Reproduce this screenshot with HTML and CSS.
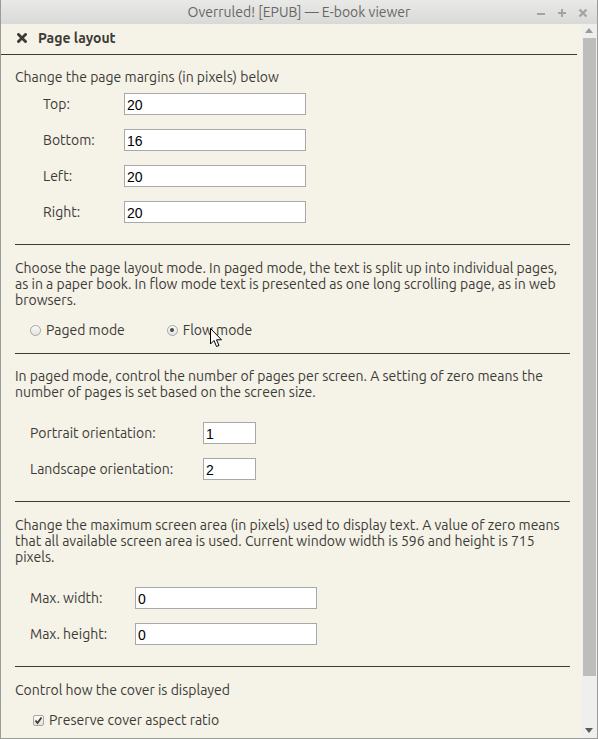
FILE: index.html
```html
<!DOCTYPE html>
<html>
<head>
<meta charset="utf-8">
<link rel="stylesheet" href="styles.css">
</head>
<body>
<div class="window">
  <div class="titlebar">
    <div class="title">Overruled! [EPUB] — E-book viewer</div>
    <div class="wbtns">
      <svg class="wbtn" width="10" height="10" viewBox="0 0 10 10"><rect x="1" y="5" width="8" height="2" fill="#a3a3a3"/></svg>
      <svg class="wbtn" width="10" height="10" viewBox="0 0 10 10"><rect x="1" y="4" width="8" height="2" fill="#a3a3a3"/><rect x="4" y="1" width="2" height="8" fill="#a3a3a3"/></svg>
      <svg class="wbtn" width="10" height="10" viewBox="0 0 10 10"><path d="M1.5 1.5 L8.5 8.5 M8.5 1.5 L1.5 8.5" stroke="#a3a3a3" stroke-width="2.2"/></svg>
    </div>
  </div>
  <div class="main">
    <div class="content">
      <div class="header">
        <svg class="close-ico" width="10" height="10" viewBox="0 0 10 10"><path d="M1.5 1.5 L8.5 8.5 M8.5 1.5 L1.5 8.5" stroke="#3c3b37" stroke-width="2.8" stroke-linecap="square"/></svg>
        <span class="header-title">Page layout</span>
      </div>
      <div class="sections">
        <section class="sec first">
          <p>Change the page margins (in pixels) below</p>
          <div class="form margins">
            <label>Top:</label><input type="text" value="20">
            <label>Bottom:</label><input type="text" value="16">
            <label>Left:</label><input type="text" value="20">
            <label>Right:</label><input type="text" value="20">
          </div>
        </section>
        <hr>
        <section class="sec">
          <p>Choose the page layout mode. In paged mode, the text is split up into individual pages, as in a paper book. In flow mode text is presented as one long scrolling page, as in web browsers.</p>
          <div class="radios">
            <span class="radio"><span class="rbox"></span>Paged mode</span>
            <span class="radio"><span class="rbox on"></span>Flow mode</span>
          </div>
        </section>
        <hr class="short">
        <section class="sec tight">
          <p>In paged mode, control the number of pages per screen. A setting of zero means the number of pages is set based on the screen size.</p>
          <div class="form pages">
            <label>Portrait orientation:</label><input type="text" value="1">
            <label>Landscape orientation:</label><input type="text" value="2">
          </div>
        </section>
        <hr>
        <section class="sec">
          <p>Change the maximum screen area (in pixels) used to display text. A value of zero means that all available screen area is used. Current window width is 596 and height is 715 pixels.</p>
          <div class="form area">
            <label>Max. width:</label><input type="text" value="0">
            <label>Max. height:</label><input type="text" value="0">
          </div>
        </section>
        <hr>
        <section class="sec">
          <p>Control how the cover is displayed</p>
          <div class="check"><span class="cbox"><svg width="9" height="9" viewBox="0 0 9 9"><path d="M1.5 4.5 L3.5 7 L7.5 1.5" stroke="#3c3b37" stroke-width="1.8" fill="none"/></svg></span>Preserve cover aspect ratio</div>
        </section>
      </div>
    </div>
    <div class="scrollbar">
      <div class="arrow up"></div>
      <div class="track"><div class="thumb"></div></div>
      <div class="arrow down"></div>
    </div>
  </div>
  <svg class="cursor" width="14" height="22" viewBox="0 0 14 22"><path d="M0.5 0.5 L0.5 16 L4 12.5 L6.5 18.5 L9 17.5 L6.5 11.8 L11.5 11.8 Z" fill="#fff" stroke="#000" stroke-width="1" stroke-linejoin="miter"/></svg>
</div>
</body>
</html>
```

FILE: styles.css
```css
html, body {
  margin: 0;
  padding: 0;
  background: #f5f2e7;
}
.window {
  position: relative;
  width: 598px;
  height: 739px;
  box-sizing: border-box;
  border: 1px solid #9b9b99;
  border-top: none;
  display: flex;
  flex-direction: column;
  overflow: hidden;
  font-family: "Ubuntu", "Lato", "Open Sans", sans-serif;
  font-size: 14px;
  color: #3c3b37;
  background: #f5f2e7;
}
.titlebar {
  height: 24px;
  flex: none;
  background: linear-gradient(#e9e9e7, #d9d9d7);
  position: relative;
  display: flex;
  align-items: center;
  justify-content: center;
  margin: 0 -1px;
  border-radius: 4px 4px 0 0;
}
.title {
  color: #676765;
  font-size: 14px;
  line-height: 16px;
}
.wbtns {
  position: absolute;
  right: 10px;
  top: 8px;
  display: flex;
  gap: 11px;
}
.wbtn { display: block; }
.main {
  flex: 1;
  display: flex;
  min-height: 0;
}
.content {
  flex: 1;
  min-width: 0;
}
.header {
  margin-right: 5px;
  border-bottom: 1px solid #3c3b37;
  display: flex;
  align-items: flex-start;
  padding-top: 6px;
  box-sizing: content-box;
  height: 24px;
}
.close-ico {
  margin: 3px 0 0 16px;
}
.header-title {
  margin-left: 11px;
  font-weight: bold;
  line-height: 16px;
}
.sections {
  padding: 0 12px 0 14px;
}
p {
  margin: 0;
  line-height: 16px;
}
.sec { padding-top: 15px; }
.sec.first { padding-top: 14px; }
.sec.tight { padding-top: 14px; }
hr {
  border: none;
  border-top: 1px solid #3c3b37;
  margin: 21px 0 0 0;
  height: 0;
}
hr.short { margin-top: 15px; }
.form {
  display: grid;
  row-gap: 14px;
  margin-top: 22px;
  align-items: center;
}
.margins {
  margin-top: 8px;
  grid-template-columns: 81px 182px;
  padding-left: 28px;
}
.pages {
  grid-template-columns: 173px 53px;
  padding-left: 15px;
}
.area {
  grid-template-columns: 105px 182px;
  padding-left: 15px;
}
label {
  line-height: 16px;
}
input {
  box-sizing: border-box;
  height: 22px;
  width: 100%;
  border: 1px solid #a8a8a6;
  background: #fff;
  font-family: "Liberation Sans", Arial, sans-serif;
  font-size: 14px;
  padding: 2px 2px 0;
  color: #000;
  margin: 0;
  outline: none;
}
.radios {
  margin-top: 14px;
  padding-left: 15px;
  display: flex;
  line-height: 16px;
}
.radio {
  display: flex;
  align-items: center;
}
.radio + .radio { margin-left: 42px; }
.rbox {
  width: 11px;
  height: 11px;
  box-sizing: border-box;
  border-radius: 50%;
  border: 1px solid #a5a5a3;
  background: linear-gradient(#fbfbfb, #e2e2e0);
  margin-right: 5px;
  position: relative;
}
.rbox.on::after {
  content: "";
  position: absolute;
  left: 2.5px;
  top: 2.5px;
  width: 4px;
  height: 4px;
  border-radius: 50%;
  background: #4a4a48;
}
.check {
  margin-top: 14px;
  padding-left: 18px;
  display: flex;
  align-items: center;
  line-height: 16px;
}
.cbox {
  width: 11px;
  height: 11px;
  box-sizing: border-box;
  border: 1px solid #a5a5a3;
  border-radius: 2px;
  background: linear-gradient(#fbfbfb, #e2e2e0);
  margin-right: 5px;
  display: flex;
  align-items: center;
  justify-content: center;
}
.cbox svg { display: block; }
.scrollbar {
  width: 15px;
  flex: none;
  background: #efefee;
  display: flex;
  flex-direction: column;
}
.arrow {
  height: 14px;
  flex: none;
  position: relative;
}
.arrow::after {
  content: "";
  position: absolute;
  left: 3px;
  border-left: 4px solid transparent;
  border-right: 4px solid transparent;
}
.arrow.up::after {
  top: 4px;
  border-bottom: 5px solid #9a9a98;
}
.arrow.down::after {
  top: 4px;
  border-top: 5px solid #5a5a58;
}
.track {
  flex: 1;
  padding: 0 1px;
}
.thumb {
  height: 638px;
  background: #bdbdbb;
}
.cursor {
  position: absolute;
  left: 209px;
  top: 328px;
}
```
